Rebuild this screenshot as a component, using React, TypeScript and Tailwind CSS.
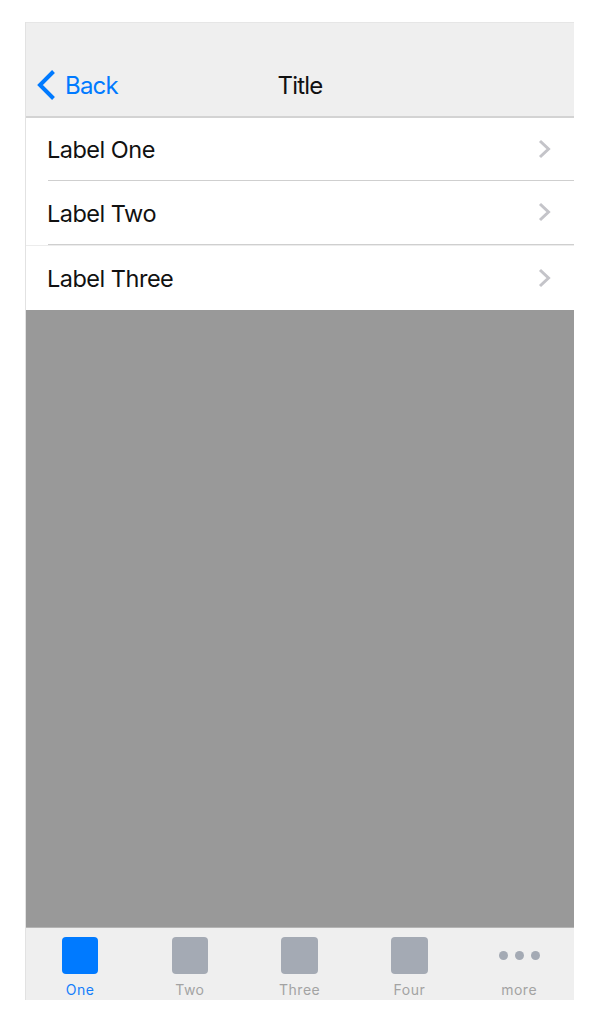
const font = { fontFamily: '"Inter", "Liberation Sans", sans-serif' };

function Chevron() {
  return (
    <svg width="13" height="20" viewBox="0 0 13 20" fill="none" className="-mt-[1px]">
      <path d="M2 2l8.5 8L2 18" stroke="#c4c4c9" strokeWidth="3" />
    </svg>
  );
}

function RowContent({ label }: { label: string }) {
  return (
    <div className="flex flex-1 items-center justify-between pr-[23.5px] pl-[21px]">
      <span className="pt-[1.5px] text-[23.5px] leading-none tracking-[-0.5px] text-[#111]">{label}</span>
      <Chevron />
    </div>
  );
}

function Tab({ label, active, more }: { label: string; active?: boolean; more?: boolean }) {
  return (
    <div className="flex w-[110px] flex-col items-center">
      {more ? (
        <div className="flex h-[36.5px] items-center gap-[7px]">
          <span className="size-[9px] rounded-full bg-[#a4aab4]" />
          <span className="size-[9px] rounded-full bg-[#a4aab4]" />
          <span className="size-[9px] rounded-full bg-[#a4aab4]" />
        </div>
      ) : (
        <div className={`size-[36.5px] rounded-[4px] ${active ? "bg-[#007aff]" : "bg-[#a4aab4]"}`} />
      )}
      <span className={`mt-[7px] text-[14px] leading-[17px] tracking-[0.5px] ${active ? "text-[#147efb]" : "text-[#a3a3a3]"}`}>
        {label}
      </span>
    </div>
  );
}

export default function App() {
  return (
    <div className="h-[1024px] bg-white pt-[22px] pl-[25px]" style={font}>
      <div className="flex h-[978px] w-[549px] flex-col border-l border-[#e2e2e2]">
        <div className="flex h-[94px] flex-col border-t border-[#e6e6e6] bg-[#efefef]">
          <div className="relative mt-[44px] flex h-[37px] items-center pl-[10px]">
            <svg width="20" height="32" viewBox="0 0 20 32" fill="none" className="-mt-[1px]">
              <path d="M17.5 2.5L4 16l13.5 13.5" stroke="#007aff" strokeWidth="4" />
            </svg>
            <span className="ml-[9px] text-[24px] leading-none tracking-[-0.8px] text-[#007aff]">Back</span>
            <span className="absolute inset-x-0 text-center text-[24px] leading-none tracking-[-0.75px] text-[#111]">Title</span>
          </div>
        </div>
        <div className="h-[2px] bg-[#d3d3d3]" />
        <div className="flex flex-col bg-white">
          <div className="flex h-[63px] flex-col">
            <RowContent label="Label One" />
            <div className="ml-[22px] h-px bg-[#cfcfcf]" />
          </div>
          <div className="flex h-[64px] flex-col">
            <RowContent label="Label Two" />
            <div className="ml-[22px] h-px bg-[#cfcfcf]" />
          </div>
          <div className="flex h-[65px] flex-col border-t border-[#ececec]">
            <RowContent label="Label Three" />
          </div>
        </div>
        <div className="flex-1 bg-[#999999]" />
        <div className="flex h-[73px] flex-col border-t border-[#b4b4b4] bg-[#efefef] pt-[9px]">
          <div className="-ml-[0.75px] flex">
            <Tab label="One" active />
            <Tab label="Two" />
            <Tab label="Three" />
            <Tab label="Four" />
            <Tab label="more" more />
          </div>
        </div>
      </div>
    </div>
  );
}
